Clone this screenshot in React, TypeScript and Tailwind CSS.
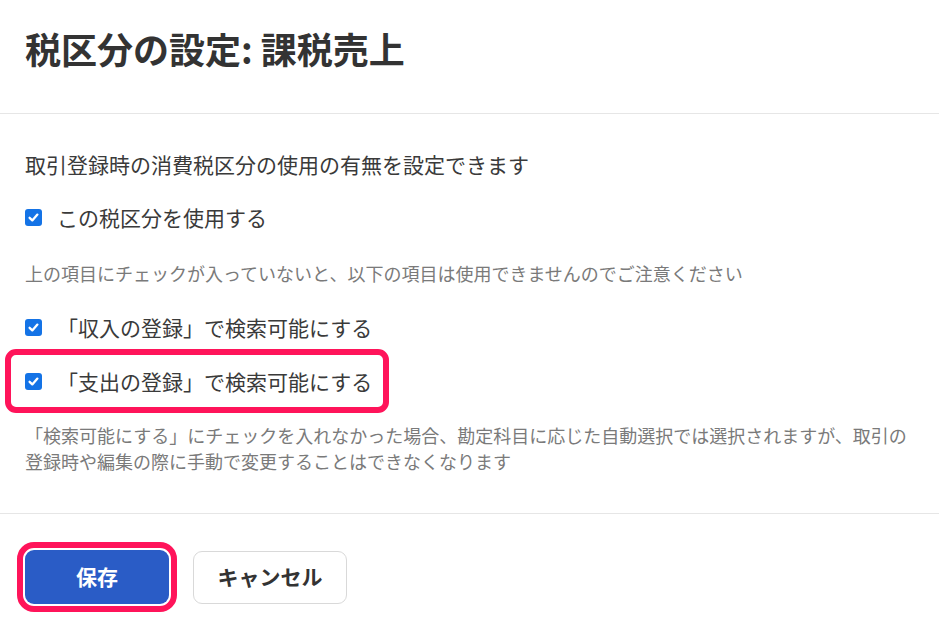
import React from "react";

function Check() {
  return (
    <span className="flex h-[17px] w-[17px] shrink-0 items-center justify-center rounded-[3px] bg-[#1473e6]">
      <svg width="13" height="13" viewBox="0 0 13 13" fill="none">
        <path d="M2.6 6.8 L5.3 9.4 L10.4 3.6" stroke="#fff" strokeWidth="2.3" strokeLinecap="round" strokeLinejoin="round" />
      </svg>
    </span>
  );
}

function Row({ label, className = "" }: { label: string; className?: string }) {
  return (
    <div className={"flex h-[30px] items-center " + className}>
      <Check />
      <span className="ml-[15px] text-[21px] leading-[30px] text-[#3a3a3a]">{label}</span>
    </div>
  );
}

export default function App() {
  return (
    <div
      className="h-[629px] w-[939px] overflow-hidden bg-white"
      style={{ fontFamily: '"Noto Sans CJK JP", "Noto Sans", sans-serif' }}
    >
      <div className="h-[113px] px-[25px] pt-[24px]">
        <h1 className="text-[36px] font-bold leading-[48px] text-[#333]">税区分の設定: 課税売上</h1>
      </div>
      <div className="h-px bg-[#e6e6e6]" />
      <div className="px-[25px] pb-[39px] pt-[35px]">
        <p className="text-[21px] leading-[30px] text-[#3a3a3a]">取引登録時の消費税区分の使用の有無を設定できます</p>
        <Row label="この税区分を使用する" className="mt-[23px]" />
        <p className="mt-[28px] text-[18px] leading-[26px] text-[#7a7a7a]">
          上の項目にチェックが入っていないと、以下の項目は使用できませんのでご注意ください
        </p>
        <Row label="「収入の登録」で検索可能にする" className="mt-[26px]" />
        <div className="relative mt-[24px]">
          <Row label="「支出の登録」で検索可能にする" />
          <div className="pointer-events-none absolute -left-[20px] -top-[17px] h-[64px] w-[384px] rounded-[11px] border-[6px] border-[#ff145a]" />
        </div>
        <p className="mt-[26px] text-[18px] leading-[26px] text-[#7a7a7a]">
          「検索可能にする」にチェックを入れなかった場合、勘定科目に応じた自動選択では選択されますが、取引の
          <br />
          登録時や編集の際に手動で変更することはできなくなります
        </p>
      </div>
      <div className="h-px bg-[#e6e6e6]" />
      <div className="flex items-center px-[25px] pt-[36px]">
        <button className="h-[54px] w-[144px] rounded-[9px] bg-[#2a5cc6] text-[21px] font-bold text-white outline-[6px] outline-offset-[2px] outline-[#ff145a] outline-solid">
          保存
        </button>
        <button className="ml-[24px] h-[53px] w-[154px] rounded-[9px] border border-[#d9d9d9] bg-white text-[21px] font-bold text-[#333]">
          キャンセル
        </button>
      </div>
    </div>
  );
}
